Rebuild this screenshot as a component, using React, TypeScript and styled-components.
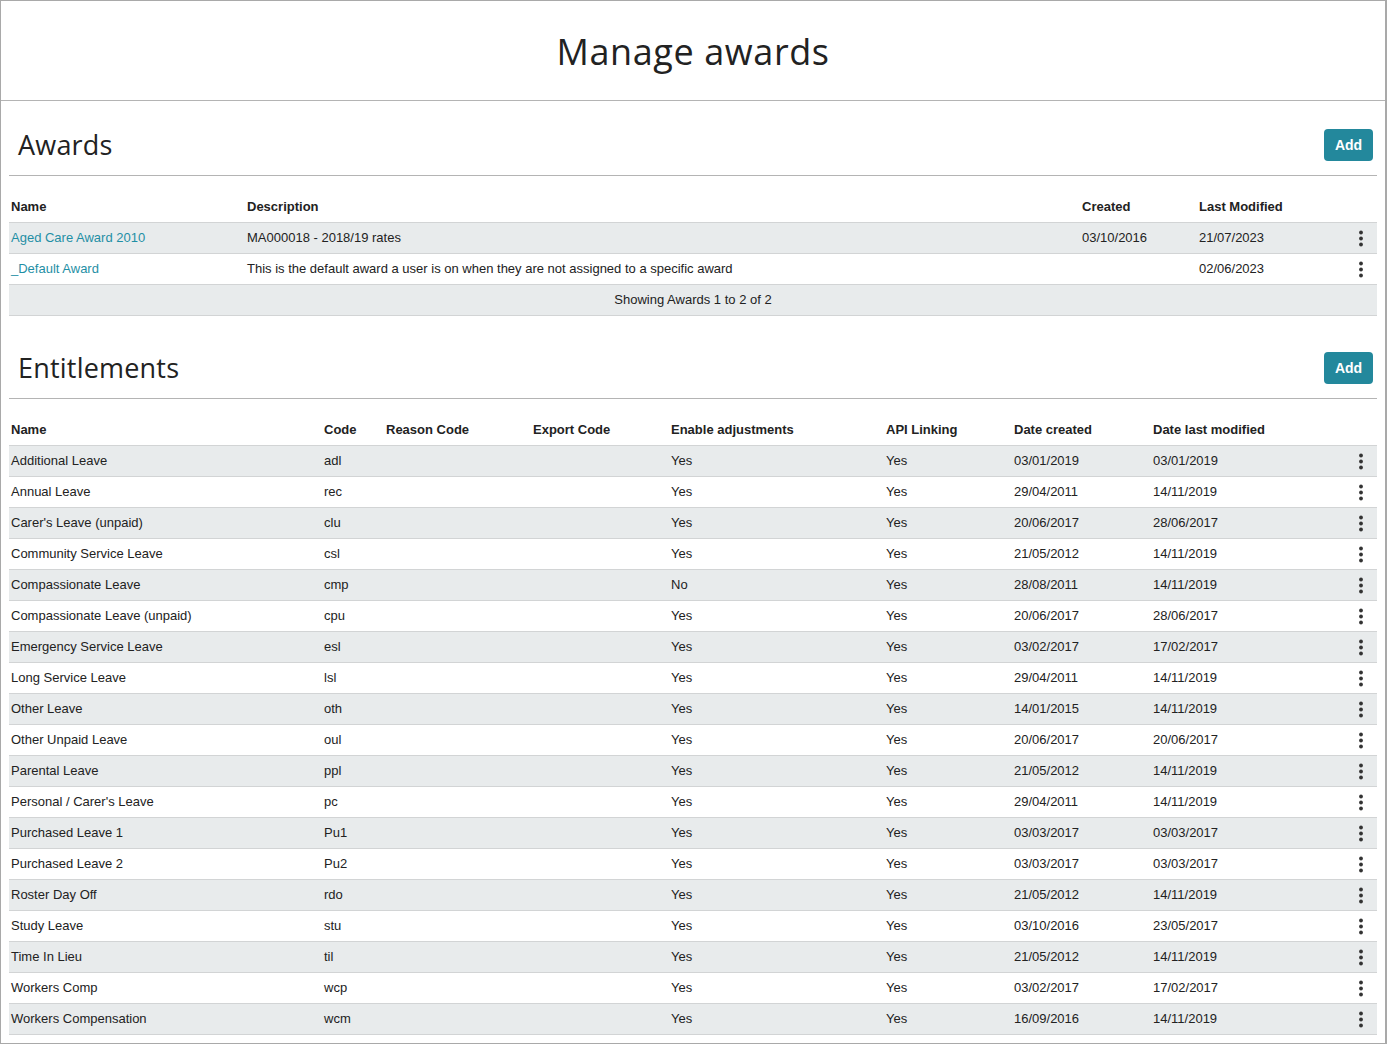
import React from "react";
import styled, { createGlobalStyle } from "styled-components";

const GlobalStyle = createGlobalStyle`
  html, body { margin: 0; padding: 0; background: #fff; }
  body { font-family: "Liberation Sans", Arial, sans-serif; font-size: 13px; color: #222; }
  * { box-sizing: border-box; }
`;

const Frame = styled.div`
  width: 1387px;
  border: 1px solid #a9a9a9;
  border-right-width: 2px;
  min-height: 1044px;
  padding-bottom: 8px;
`;

const PageHeader = styled.header`
  height: 100px;
  border-bottom: 1px solid #b4b4b4;
  display: flex;
  align-items: center;
  justify-content: center;
`;

const PageTitle = styled.h1`
  margin: 0;
  font-family: "Open Sans", "Noto Sans", sans-serif;
  font-weight: 400;
  font-size: 36px;
  letter-spacing: 0.6px;
  color: #222;
  padding-top: 2px;
`;

const Section = styled.section<{ $top: number }>`
  padding: ${(p) => p.$top}px 8px 0 8px;
`;

const SectionHead = styled.div`
  display: flex;
  align-items: center;
  justify-content: space-between;
  padding: 0 4px 14px 9px;
  border-bottom: 1px solid #b4b4b4;
`;

const SectionTitle = styled.h2`
  margin: 0;
  font-family: "Open Sans", "Noto Sans", sans-serif;
  font-weight: 400;
  font-size: 27px;
  line-height: 32px;
  letter-spacing: 0.2px;
  color: #222;
`;

const AddButton = styled.button`
  height: 32px;
  width: 49px;
  border: none;
  border-radius: 4px;
  background: #23889c;
  color: #fff;
  font-family: "Liberation Sans", Arial, sans-serif;
  font-weight: 700;
  font-size: 14px;
  cursor: pointer;
`;

const Table = styled.div`
  margin-top: 16px;
`;

const Row = styled.div<{ $cols: string; $striped?: boolean; $head?: boolean }>`
  display: grid;
  grid-template-columns: ${(p) => p.$cols};
  height: 31px;
  padding-bottom: 1px;
  align-items: center;
  border-bottom: 1px solid #d2d4d5;
  background: ${(p) => (p.$striped ? "#e8ebec" : "#fff")};
  font-weight: ${(p) => (p.$head ? 700 : 400)};
`;

const Cell = styled.div`
  padding: 0 2px;
  white-space: nowrap;
  overflow: hidden;
`;

const LinkCell = styled(Cell)`
  color: #1f8fa5;
`;

const ActionCell = styled.div`
  display: flex;
  justify-content: center;
  align-items: center;
`;

const FooterRow = styled.div`
  height: 31px;
  padding-bottom: 1px;
  display: flex;
  align-items: center;
  justify-content: center;
  background: #e8ebec;
  border-bottom: 1px solid #d2d4d5;
  font-size: 13px;
`;

const Kebab = () => (
  <svg width="6" height="18" viewBox="0 0 6 18" aria-hidden="true">
    <circle cx="3" cy="3.5" r="1.9" fill="#333" />
    <circle cx="3" cy="9.5" r="1.9" fill="#333" />
    <circle cx="3" cy="15.5" r="1.9" fill="#333" />
  </svg>
);

const awardCols = "236px 835px 117px 148px 32px";
const entCols = "313px 62px 147px 138px 215px 128px 139px 194px 32px";

const awards = [
  ["Aged Care Award 2010", "MA000018 - 2018/19 rates", "03/10/2016", "21/07/2023"],
  ["_Default Award", "This is the default award a user is on when they are not assigned to a specific award", "", "02/06/2023"],
];

const entitlements = [
  ["Additional Leave", "adl", "Yes", "03/01/2019", "03/01/2019"],
  ["Annual Leave", "rec", "Yes", "29/04/2011", "14/11/2019"],
  ["Carer's Leave (unpaid)", "clu", "Yes", "20/06/2017", "28/06/2017"],
  ["Community Service Leave", "csl", "Yes", "21/05/2012", "14/11/2019"],
  ["Compassionate Leave", "cmp", "No", "28/08/2011", "14/11/2019"],
  ["Compassionate Leave (unpaid)", "cpu", "Yes", "20/06/2017", "28/06/2017"],
  ["Emergency Service Leave", "esl", "Yes", "03/02/2017", "17/02/2017"],
  ["Long Service Leave", "lsl", "Yes", "29/04/2011", "14/11/2019"],
  ["Other Leave", "oth", "Yes", "14/01/2015", "14/11/2019"],
  ["Other Unpaid Leave", "oul", "Yes", "20/06/2017", "20/06/2017"],
  ["Parental Leave", "ppl", "Yes", "21/05/2012", "14/11/2019"],
  ["Personal / Carer's Leave", "pc", "Yes", "29/04/2011", "14/11/2019"],
  ["Purchased Leave 1", "Pu1", "Yes", "03/03/2017", "03/03/2017"],
  ["Purchased Leave 2", "Pu2", "Yes", "03/03/2017", "03/03/2017"],
  ["Roster Day Off", "rdo", "Yes", "21/05/2012", "14/11/2019"],
  ["Study Leave", "stu", "Yes", "03/10/2016", "23/05/2017"],
  ["Time In Lieu", "til", "Yes", "21/05/2012", "14/11/2019"],
  ["Workers Comp", "wcp", "Yes", "03/02/2017", "17/02/2017"],
  ["Workers Compensation", "wcm", "Yes", "16/09/2016", "14/11/2019"],
];

export default function App() {
  return (
    <>
      <GlobalStyle />
      <Frame>
        <PageHeader>
          <PageTitle>Manage awards</PageTitle>
        </PageHeader>

        <Section $top={28}>
          <SectionHead>
            <SectionTitle>Awards</SectionTitle>
            <AddButton>Add</AddButton>
          </SectionHead>
          <Table>
            <Row $cols={awardCols} $head>
              <Cell>Name</Cell>
              <Cell>Description</Cell>
              <Cell>Created</Cell>
              <Cell>Last Modified</Cell>
              <Cell />
            </Row>
            {awards.map((a, i) => (
              <Row key={a[0]} $cols={awardCols} $striped={i % 2 === 0}>
                <LinkCell>{a[0]}</LinkCell>
                <Cell>{a[1]}</Cell>
                <Cell>{a[2]}</Cell>
                <Cell>{a[3]}</Cell>
                <ActionCell>
                  <Kebab />
                </ActionCell>
              </Row>
            ))}
            <FooterRow>Showing Awards 1 to 2 of 2</FooterRow>
          </Table>
        </Section>

        <Section $top={36}>
          <SectionHead>
            <SectionTitle>Entitlements</SectionTitle>
            <AddButton>Add</AddButton>
          </SectionHead>
          <Table>
            <Row $cols={entCols} $head>
              <Cell>Name</Cell>
              <Cell>Code</Cell>
              <Cell>Reason Code</Cell>
              <Cell>Export Code</Cell>
              <Cell>Enable adjustments</Cell>
              <Cell>API Linking</Cell>
              <Cell>Date created</Cell>
              <Cell>Date last modified</Cell>
              <Cell />
            </Row>
            {entitlements.map((e, i) => (
              <Row key={e[0]} $cols={entCols} $striped={i % 2 === 0}>
                <Cell>{e[0]}</Cell>
                <Cell>{e[1]}</Cell>
                <Cell />
                <Cell />
                <Cell>{e[2]}</Cell>
                <Cell>Yes</Cell>
                <Cell>{e[3]}</Cell>
                <Cell>{e[4]}</Cell>
                <ActionCell>
                  <Kebab />
                </ActionCell>
              </Row>
            ))}
          </Table>
        </Section>
      </Frame>
    </>
  );
}
